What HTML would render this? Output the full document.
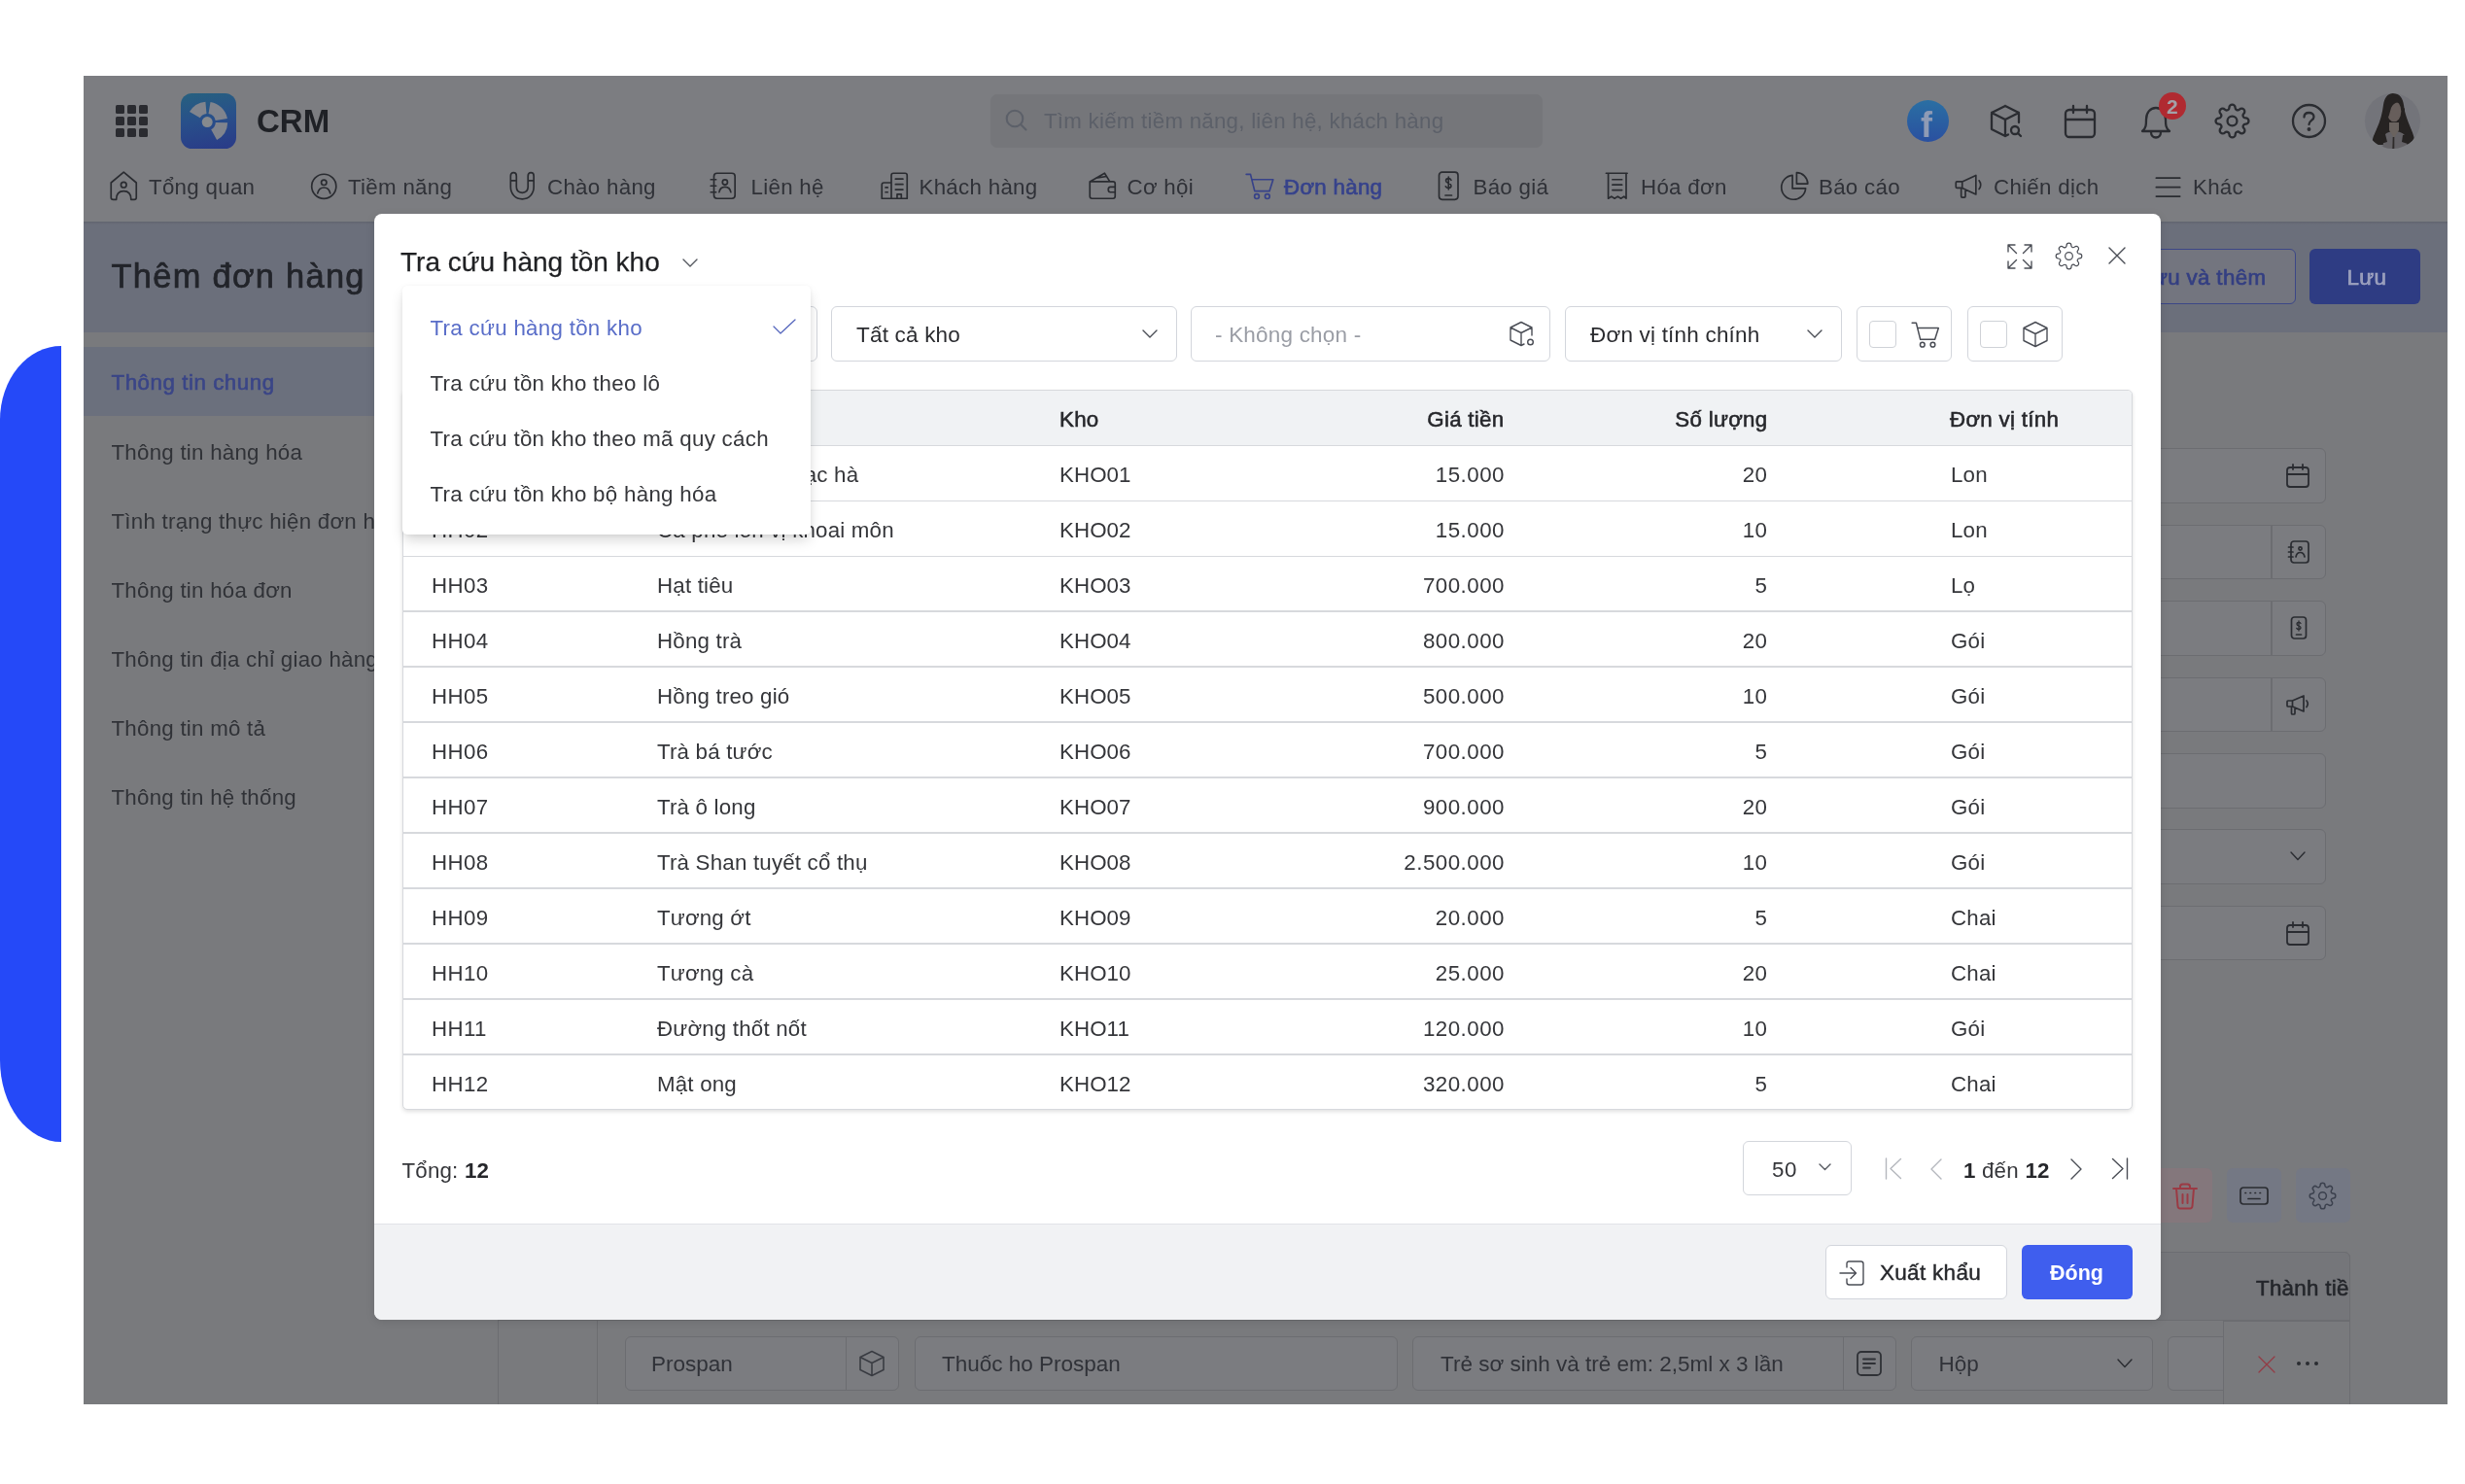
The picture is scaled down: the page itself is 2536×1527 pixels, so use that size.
<!DOCTYPE html>
<html lang="vi">
<head>
<meta charset="utf-8">
<title>Tra cứu hàng tồn kho</title>
<style>
*{box-sizing:border-box;margin:0;padding:0}
html,body{width:2536px;height:1527px;overflow:hidden;background:#fff}
body{position:relative;font-family:"Liberation Sans",sans-serif;font-size:22px;color:#2b2c30}
#wrap{position:absolute;left:0;top:0;width:2536px;height:1527px;will-change:transform;transform:translateZ(0)}
.a{position:absolute}
svg{position:absolute;overflow:visible}
.t{position:absolute;white-space:nowrap;line-height:1}
.fld{border:1.5px solid #6c6d71;border-radius:6px}
.box{border:1.5px solid #d3d6dc;border-radius:6px}
</style>
</head>
<body><div id="wrap">

<div class="a " style="left:0px;top:356px;width:63.3px;height:819px;background:#2549f8;border-radius:63px 0 0 63px / 76px 0 0 84px"></div>
<div class="a " style="left:86px;top:78px;width:2432px;height:1367px;background:#797a7d;"></div>
<div class="a " style="left:86px;top:78px;width:2432px;height:150px;background:#7c7d81;"></div>
<div class="a " style="left:86px;top:228px;width:2432px;height:114px;background:#6b6f7b;"></div>
<div class="a " style="left:86px;top:228px;width:2432px;height:3px;background:linear-gradient(rgba(0,0,0,.10),rgba(0,0,0,0));"></div>
<div class="a " style="left:119.0px;top:108.0px;width:8.6px;height:8.6px;background:#2a2b30;border-radius:1.5px"></div>
<div class="a " style="left:131.2px;top:108.0px;width:8.6px;height:8.6px;background:#2a2b30;border-radius:1.5px"></div>
<div class="a " style="left:143.4px;top:108.0px;width:8.6px;height:8.6px;background:#2a2b30;border-radius:1.5px"></div>
<div class="a " style="left:119.0px;top:120.2px;width:8.6px;height:8.6px;background:#2a2b30;border-radius:1.5px"></div>
<div class="a " style="left:131.2px;top:120.2px;width:8.6px;height:8.6px;background:#2a2b30;border-radius:1.5px"></div>
<div class="a " style="left:143.4px;top:120.2px;width:8.6px;height:8.6px;background:#2a2b30;border-radius:1.5px"></div>
<div class="a " style="left:119.0px;top:132.4px;width:8.6px;height:8.6px;background:#2a2b30;border-radius:1.5px"></div>
<div class="a " style="left:131.2px;top:132.4px;width:8.6px;height:8.6px;background:#2a2b30;border-radius:1.5px"></div>
<div class="a " style="left:143.4px;top:132.4px;width:8.6px;height:8.6px;background:#2a2b30;border-radius:1.5px"></div>
<div class="a " style="left:186px;top:96px;width:57px;height:57px;background:linear-gradient(170deg,#27617f 0%,#28508a 45%,#2a3a88 100%);border-radius:11.5px"></div>
<svg style="left:186px;top:96px;color:#2b2c30;" width="57" height="57" viewBox="0 0 57 57" fill="none" stroke="currentColor" stroke-width="2" stroke-linecap="round" stroke-linejoin="round"><g fill="#80848d" stroke="none">
<path d="M9.0 19.1 A21 21 0 0 1 25.4 8.7 L26.5 21.0 A8.6 8.6 0 0 0 19.8 25.3 Z M30.5 8.9 A21 21 0 0 1 47.9 26.0 L35.7 28.1 A8.6 8.6 0 0 0 28.5 21.1 Z M48.2 30.3 A21 21 0 0 1 37.1 48.1 L31.2 37.2 A8.6 8.6 0 0 0 35.8 29.9 Z"/>
<circle cx="27.2" cy="29.6" r="5.5" fill="#868a8e"/></g></svg>
<div class="t" style="left:264px;top:108.1px;font-size:33px;color:#1f2126;font-weight:700;">CRM</div>
<div class="a " style="left:1019px;top:97px;width:568px;height:54.5px;background:#75767a;border-radius:7px"></div>
<svg style="left:1031px;top:109px;color:#5c6069;" width="28" height="28" viewBox="0 0 28 28" fill="none" stroke="currentColor" stroke-width="2.1" stroke-linecap="round" stroke-linejoin="round"><circle cx="13" cy="13" r="8.3"/><path d="M19.3 19.3 L24.5 24.5"/></svg>
<div class="t" style="left:1074px;top:113.8px;font-size:22.3px;color:#5c6069;letter-spacing:0.25px;">Tìm kiếm tiềm năng, liên hệ, khách hàng</div>
<div class="a " style="left:1962px;top:103px;width:43px;height:43px;background:linear-gradient(180deg,#2a6fa3,#2a50a0);border-radius:50%"></div>
<div class="t" style="left:1976px;top:110.5px;font-size:36px;color:#8f9bb5;font-weight:700;">f</div>
<svg style="left:2044px;top:106px;color:#2a2c31;" width="38" height="38" viewBox="0 0 38 38" fill="none" stroke="currentColor" stroke-width="2.3" stroke-linecap="round" stroke-linejoin="round"><path d="M19 3 L33 10 L33 20 M19 3 L5 10 L5 27 L19 34 L19 17 L5 10 M19 17 L33 10 M19 34 L22 32.5"/><circle cx="29" cy="28" r="4"/><path d="M32 31 L35 34"/></svg>
<svg style="left:2123px;top:107px;color:#2a2c31;" width="34" height="36" viewBox="0 0 34 36" fill="none" stroke="currentColor" stroke-width="2.3" stroke-linecap="round" stroke-linejoin="round"><rect x="2" y="6" width="30" height="28" rx="4"/><path d="M2 16 H32 M10 2 V9 M24 2 V9"/></svg>
<svg style="left:2200px;top:106px;color:#2a2c31;" width="36" height="38" viewBox="0 0 36 38" fill="none" stroke="currentColor" stroke-width="2.3" stroke-linecap="round" stroke-linejoin="round"><path d="M4 29 C8 26 8 22 8 17 C8 10 12 5 18 5 C24 5 28 10 28 17 C28 22 28 26 32 29 Z M13 30 C13 33 15 35.5 18 35.5 C21 35.5 23 33 23 30"/></svg>
<div class="a " style="left:2220.7px;top:94.5px;width:28.5px;height:28.5px;background:#b02a31;border-radius:50%"></div>
<div class="t" style="left:2229px;top:99.0px;font-size:21px;color:#a3a1a8;font-weight:700;">2</div>
<svg style="left:2278px;top:106px;color:#2a2c31;" width="37" height="37" viewBox="0 0 24 24" fill="none" stroke="currentColor" stroke-width="1.5" stroke-linecap="round" stroke-linejoin="round"><path d="M19.4 15a1.65 1.65 0 0 0 .33 1.82l.06.06a2 2 0 1 1-2.83 2.83l-.06-.06a1.65 1.65 0 0 0-1.82-.33 1.65 1.65 0 0 0-1 1.51V21a2 2 0 0 1-4 0v-.09A1.65 1.65 0 0 0 9 19.4a1.65 1.65 0 0 0-1.82.33l-.06.06a2 2 0 1 1-2.83-2.83l.06-.06a1.65 1.65 0 0 0 .33-1.82 1.65 1.65 0 0 0-1.51-1H3a2 2 0 0 1 0-4h.09A1.65 1.65 0 0 0 4.6 9a1.65 1.65 0 0 0-.33-1.82l-.06-.06a2 2 0 1 1 2.83-2.83l.06.06a1.65 1.65 0 0 0 1.82.33H9a1.65 1.65 0 0 0 1-1.51V3a2 2 0 0 1 4 0v.09a1.65 1.65 0 0 0 1 1.51 1.65 1.65 0 0 0 1.82-.33l.06-.06a2 2 0 1 1 2.83 2.83l-.06.06a1.65 1.65 0 0 0-.33 1.82V9a1.65 1.65 0 0 0 1.51 1H21a2 2 0 0 1 0 4h-.09a1.65 1.65 0 0 0-1.51 1z"/><circle cx="12" cy="12" r="3.2"/></svg>
<svg style="left:2357px;top:106px;color:#2a2c31;" width="37" height="37" viewBox="0 0 37 37" fill="none" stroke="currentColor" stroke-width="2.3" stroke-linecap="round" stroke-linejoin="round"><circle cx="18.5" cy="18.5" r="16.5"/><path d="M13.5 14.5 C13.5 11.5 15.5 10 18.5 10 C21.5 10 23.5 11.8 23.5 14.3 C23.5 18 18.5 17.8 18.5 22"/><circle cx="18.5" cy="27" r="0.8" fill="currentColor"/></svg>
<div class="a " style="left:2433px;top:96px;width:57px;height:57px;background:#73747a;border-radius:50%"></div>
<svg style="left:2433px;top:96px;color:#2b2c30;" width="57" height="57" viewBox="0 0 57 57" fill="none" stroke="currentColor" stroke-width="2" stroke-linecap="round" stroke-linejoin="round"><defs><clipPath id="av"><circle cx="28.5" cy="28.5" r="28.5"/></clipPath></defs>
<g clip-path="url(#av)" stroke="none">
<path d="M29 0 C36 0 39 5 40 12 C41 22 45 30 48 38 C51 45 52 50 49 53 L9 53 C6 49 9 44 12 37 C16 28 18 20 19 12 C20 5 23 0 29 0 Z" fill="#262322"/>
<path d="M20 43 C23 40 26 39 30 39 C35 39 40 41 43 45 L44 58 L18 58 Z" fill="#646266"/>
<path d="M25 30 L35 30 L35 38 L30 46 L25 38 Z" fill="#6a635f"/>
<ellipse cx="30" cy="18.5" rx="7.3" ry="10.8" fill="#675e5b"/>
<path d="M21 22 C20 10 25 4 31 4 C35 4 38 7 39 11 C34 8 29 10 27 15 C25.5 20 24.5 25 22 29 Z" fill="#262322"/>
<path d="M37.5 12 C39.5 18 38.5 26 36.5 31 L40 33 L41 16 Z" fill="#262322"/>
<path d="M28.7 45 L30.3 45 L30.3 58 L28.3 58 Z" fill="#2e2b2a"/>
<path d="M13 36 C15 40 18 42 21 42 L23 50 L13 53 L9 50 Z" fill="#262322"/>
<path d="M47 37 C45 41 42 43 39 43 L38 50 L47 53 L50 50 Z" fill="#262322"/>
</g></svg>
<div class="t" style="left:153px;top:181.6px;font-size:22.3px;color:#2f3137;letter-spacing:0.3px;">Tổng quan</div>
<div class="t" style="left:358px;top:181.6px;font-size:22.3px;color:#2f3137;letter-spacing:0.3px;">Tiềm năng</div>
<div class="t" style="left:563px;top:181.6px;font-size:22.3px;color:#2f3137;letter-spacing:0.3px;">Chào hàng</div>
<div class="t" style="left:772.5px;top:181.6px;font-size:22.3px;color:#2f3137;letter-spacing:0.3px;">Liên hệ</div>
<div class="t" style="left:945.5px;top:181.6px;font-size:22.3px;color:#2f3137;letter-spacing:0.3px;">Khách hàng</div>
<div class="t" style="left:1159.5px;top:181.6px;font-size:22.3px;color:#2f3137;letter-spacing:0.3px;">Cơ hội</div>
<div class="t" style="left:1321px;top:181.6px;font-size:22.3px;color:#374289;letter-spacing:0.3px;-webkit-text-stroke:.7px #36438e;">Đơn hàng</div>
<div class="t" style="left:1515.5px;top:181.6px;font-size:22.3px;color:#2f3137;letter-spacing:0.3px;">Báo giá</div>
<div class="t" style="left:1688px;top:181.6px;font-size:22.3px;color:#2f3137;letter-spacing:0.3px;">Hóa đơn</div>
<div class="t" style="left:1871px;top:181.6px;font-size:22.3px;color:#2f3137;letter-spacing:0.3px;">Báo cáo</div>
<div class="t" style="left:2051px;top:181.6px;font-size:22.3px;color:#2f3137;letter-spacing:0.3px;">Chiến dịch</div>
<div class="t" style="left:2256px;top:181.6px;font-size:22.3px;color:#2f3137;letter-spacing:0.3px;">Khác</div>
<svg style="left:111.25px;top:175.45px;color:#2a2c31;" width="32.5" height="32.5" viewBox="0 0 30 30" fill="none" stroke="currentColor" stroke-width="1.55" stroke-linecap="round" stroke-linejoin="round"><path d="M15 2 L27 12 V26 Q27 28 25 28 H22 C22 22 19.5 20 15 20 C10.5 20 8 22 8 28 H5 Q3 28 3 26 V12 Z"/><circle cx="15" cy="14" r="2.6"/></svg>
<svg style="left:317.25px;top:175.45px;color:#2a2c31;" width="32.5" height="32.5" viewBox="0 0 30 30" fill="none" stroke="currentColor" stroke-width="1.55" stroke-linecap="round" stroke-linejoin="round"><circle cx="15" cy="15.5" r="11.6"/><circle cx="15" cy="11.8" r="2.5"/><path d="M9 22 C10 18 12.2 16.6 15 16.6 C17.8 16.6 20 18 21 22"/></svg>
<svg style="left:521.25px;top:175.45px;color:#2a2c31;" width="32.5" height="32.5" viewBox="0 0 30 30" fill="none" stroke="currentColor" stroke-width="1.55" stroke-linecap="round" stroke-linejoin="round"><path d="M4 5.5 Q4 2.5 6.75 2.5 Q9.5 2.5 9.5 5.5 V16 C9.5 19.5 11.5 21.5 15 21.5 C18.5 21.5 20.5 19.5 20.5 16 V5.5 Q20.5 2.5 23.25 2.5 Q26 2.5 26 5.5 V16 C26 22.5 21.5 27.5 15 27.5 C8.5 27.5 4 22.5 4 16 Z M4 10 H9.5 M20.5 10 H26"/></svg>
<svg style="left:727.75px;top:175.45px;color:#2a2c31;" width="32.5" height="32.5" viewBox="0 0 30 30" fill="none" stroke="currentColor" stroke-width="1.55" stroke-linecap="round" stroke-linejoin="round"><rect x="6" y="3" width="20" height="24" rx="3"/><path d="M3 9 H8 M3 15 H8 M3 21 H8"/><circle cx="16.5" cy="11.5" r="2.4"/><path d="M11 21 C11.5 17.5 13.5 16 16.5 16 C19.5 16 21.5 17.5 22 21"/></svg>
<svg style="left:903.75px;top:175.45px;color:#2a2c31;" width="32.5" height="32.5" viewBox="0 0 30 30" fill="none" stroke="currentColor" stroke-width="1.55" stroke-linecap="round" stroke-linejoin="round"><path d="M12 27 V5 Q12 3 14 3 H25 Q27 3 27 5 V27 Z M12 12 H5 Q3 12 3 14 V27 H12"/><path d="M16 8.5 H23 M16 13.5 H23 M16 18.5 H23 M6.5 16.5 H8.5 M6.5 21 H8.5 M17.5 27 V23 H21.5 V27"/></svg>
<svg style="left:1117.75px;top:175.45px;color:#2a2c31;" width="32.5" height="32.5" viewBox="0 0 30 30" fill="none" stroke="currentColor" stroke-width="1.55" stroke-linecap="round" stroke-linejoin="round"><path d="M3 11 H25 Q27 11 27 13 V25 Q27 27 25 27 H5 Q3 27 3 25 Z M3 11 L17 3 L22 11 M9 7.5 L19 6"/><path d="M27 16 H22.5 Q20.5 16 20.5 18.5 Q20.5 21 22.5 21 H27"/></svg>
<svg style="left:1279.75px;top:175.45px;color:#374289;" width="32.5" height="32.5" viewBox="0 0 30 30" fill="none" stroke="currentColor" stroke-width="1.55" stroke-linecap="round" stroke-linejoin="round"><path d="M2 4 H6 L10 20 H24 L27.5 9 H7.3"/><circle cx="12" cy="25" r="2.2"/><circle cx="22" cy="25" r="2.2"/></svg>
<svg style="left:1473.75px;top:175.45px;color:#2a2c31;" width="32.5" height="32.5" viewBox="0 0 30 30" fill="none" stroke="currentColor" stroke-width="1.55" stroke-linecap="round" stroke-linejoin="round"><rect x="6" y="2" width="18" height="26" rx="3"/><path d="M12 24 H18"/><path d="M17.5 9.5 C17 8.5 16 8 15 8 C13.5 8 12.5 9 12.5 10.2 C12.5 13 17.5 12 17.5 14.8 C17.5 16 16.5 17 15 17 C13.8 17 12.8 16.5 12.3 15.5 M15 6.5 V18.5" stroke-width="1.5"/></svg>
<svg style="left:1647.25px;top:175.45px;color:#2a2c31;" width="32.5" height="32.5" viewBox="0 0 30 30" fill="none" stroke="currentColor" stroke-width="1.55" stroke-linecap="round" stroke-linejoin="round"><path d="M5 3 H25 M7 3 V27 L10 25 L13 27 L16 25 L19 27 L22 25 L24 27 V3"/><path d="M11 9 H20 M11 14 H20 M11 19 H20"/></svg>
<svg style="left:1830.25px;top:175.45px;color:#2a2c31;" width="32.5" height="32.5" viewBox="0 0 30 30" fill="none" stroke="currentColor" stroke-width="1.55" stroke-linecap="round" stroke-linejoin="round"><path d="M13 5 A11.5 11.5 0 1 0 25.5 17.5 H13 Z"/><path d="M17 2.5 A10.5 10.5 0 0 1 27.5 13 H17 Z"/></svg>
<svg style="left:2009.25px;top:175.45px;color:#2a2c31;" width="32.5" height="32.5" viewBox="0 0 30 30" fill="none" stroke="currentColor" stroke-width="1.55" stroke-linecap="round" stroke-linejoin="round"><path d="M4 11 H9 L22 5 V23 L9 17 H4 Q3 17 3 16 V12 Q3 11 4 11 Z M9 11 V17 M8 17 V25 Q8 26 9 26 H11 Q12 26 12 25 V18.5 M25 10 Q28 14 25 18"/></svg>
<svg style="left:2214.25px;top:175.45px;color:#2a2c31;" width="32.5" height="32.5" viewBox="0 0 30 30" fill="none" stroke="currentColor" stroke-width="1.55" stroke-linecap="round" stroke-linejoin="round"><path d="M4 7.5 H26.5 M4 16.3 H26.5 M4 25 H26.5"/></svg>
<div class="t" style="left:114.5px;top:267.4px;font-size:34.4px;color:#22242a;letter-spacing:1.3px;-webkit-text-stroke:.7px #22242a;">Thêm đơn hàng</div>
<div class="a " style="left:2150px;top:256px;width:211.5px;height:56.5px;background:#73757f;border:1.8px solid #3c4787;border-radius:6px"></div>
<div class="t" style="left:2215px;top:275.1px;font-size:22.3px;color:#343f82;letter-spacing:0.35px;-webkit-text-stroke:.7px #343f82;">ưu và thêm</div>
<div class="a " style="left:2376px;top:256px;width:114px;height:56.5px;background:#2e3c83;border-radius:6px"></div>
<div class="t" style="left:2414.5px;top:275.1px;font-size:22.3px;color:#979cb8;letter-spacing:0.3px;-webkit-text-stroke:.6px #a7abc8;">Lưu</div>
<div class="a " style="left:86px;top:357px;width:426px;height:71px;background:#6b707d;"></div>
<div class="t" style="left:114.5px;top:383.4px;font-size:22.3px;color:#3a4587;letter-spacing:0.55px;-webkit-text-stroke:.6px #3a4587;">Thông tin chung</div>
<div class="t" style="left:114.5px;top:455.0px;font-size:22.3px;color:#303237;letter-spacing:0.25px;">Thông tin hàng hóa</div>
<div class="t" style="left:114.5px;top:526.0px;font-size:22.3px;color:#303237;letter-spacing:0.25px;">Tình trạng thực hiện đơn hàng</div>
<div class="t" style="left:114.5px;top:597.1px;font-size:22.3px;color:#303237;letter-spacing:0.25px;">Thông tin hóa đơn</div>
<div class="t" style="left:114.5px;top:668.1px;font-size:22.3px;color:#303237;letter-spacing:0.25px;">Thông tin địa chỉ giao hàng</div>
<div class="t" style="left:114.5px;top:739.2px;font-size:22.3px;color:#303237;letter-spacing:0.25px;">Thông tin mô tả</div>
<div class="t" style="left:114.5px;top:810.2px;font-size:22.3px;color:#303237;letter-spacing:0.25px;">Thông tin hệ thống</div>
<div class="a fld" style="left:1900px;top:461px;width:493px;height:56.5px;background:#7b7c80;"></div>
<div class="a fld" style="left:1900px;top:539.5px;width:493px;height:56.5px;background:#7b7c80;"></div>
<div class="a " style="left:2336px;top:539.5px;width:1.5px;height:56.5px;background:#6c6d71;"></div>
<div class="a fld" style="left:1900px;top:618px;width:493px;height:56.5px;background:#7b7c80;"></div>
<div class="a " style="left:2336px;top:618px;width:1.5px;height:56.5px;background:#6c6d71;"></div>
<div class="a fld" style="left:1900px;top:696.5px;width:493px;height:56.5px;background:#7b7c80;"></div>
<div class="a " style="left:2336px;top:696.5px;width:1.5px;height:56.5px;background:#6c6d71;"></div>
<div class="a fld" style="left:1900px;top:775px;width:493px;height:56.5px;background:#7b7c80;"></div>
<div class="a fld" style="left:1900px;top:853px;width:493px;height:56.5px;background:#7b7c80;"></div>
<div class="a fld" style="left:1900px;top:931.5px;width:493px;height:56.5px;background:#7b7c80;"></div>
<svg style="left:2350px;top:475px;color:#2a2c31;" width="28" height="28" viewBox="0 0 28 28" fill="none" stroke="currentColor" stroke-width="1.8" stroke-linecap="round" stroke-linejoin="round"><rect x="3" y="6" width="22" height="20" rx="3"/><path d="M3 13 H25 M9 3 V8 M19 3 V8"/></svg>
<svg style="left:2350px;top:945.5px;color:#2a2c31;" width="28" height="28" viewBox="0 0 28 28" fill="none" stroke="currentColor" stroke-width="1.8" stroke-linecap="round" stroke-linejoin="round"><rect x="3" y="6" width="22" height="20" rx="3"/><path d="M3 13 H25 M9 3 V8 M19 3 V8"/></svg>
<svg style="left:2351px;top:553.5px;color:#2a2c31;" width="28" height="28" viewBox="0 0 28 28" fill="none" stroke="currentColor" stroke-width="1.7" stroke-linecap="round" stroke-linejoin="round"><rect x="6" y="3" width="18" height="22" rx="3"/><path d="M3.5 9 H8 M3.5 14 H8 M3.5 19 H8"/><circle cx="15.5" cy="10.5" r="1.6"/><path d="M11 19 C11.5 16 13 14.5 15.5 14.5 C18 14.5 19.5 16 20 19"/></svg>
<svg style="left:2351px;top:632px;color:#2a2c31;" width="28" height="28" viewBox="0 0 28 28" fill="none" stroke="currentColor" stroke-width="1.7" stroke-linecap="round" stroke-linejoin="round"><rect x="6.5" y="3" width="15" height="22" rx="3"/><path d="M11.5 21 H16.5"/><path d="M16 9.5 C15.5 8.7 14.8 8.4 14 8.4 C12.8 8.4 12 9.2 12 10.2 C12 12.4 16 11.6 16 13.8 C16 14.8 15.2 15.6 14 15.6 C13 15.6 12.2 15.2 11.8 14.4 M14 7 V17" stroke-width="1.3"/></svg>
<svg style="left:2350px;top:710.5px;color:#2a2c31;" width="28" height="28" viewBox="0 0 28 28" fill="none" stroke="currentColor" stroke-width="1.7" stroke-linecap="round" stroke-linejoin="round"><path d="M4 10 H8.5 L20 5 V21 L8.5 16 H4 Q3 16 3 15 V11 Q3 10 4 10 Z M8.5 10 V16 M7.5 16 V23 Q7.5 24 8.5 24 H10 Q11 24 11 23 V17.3 M23 10 Q25.5 13 23 16.5"/></svg>
<svg style="left:2356px;top:876px;color:#2a2c31;" width="16" height="10" viewBox="0 0 16 10" fill="none" stroke="currentColor" stroke-width="1.4" stroke-linecap="round" stroke-linejoin="round"><path d="M1 1 L8 8.5 L15 1"/></svg>
<div class="a " style="left:2206px;top:1202px;width:70px;height:56px;background:#84777c;border-radius:6px"></div>
<div class="a " style="left:2291px;top:1202px;width:56px;height:56px;background:#747884;border-radius:6px"></div>
<div class="a " style="left:2361.5px;top:1202px;width:56px;height:56px;background:#747884;border-radius:6px"></div>
<svg style="left:2234px;top:1216px;color:#9b3a44;" width="28" height="30" viewBox="0 0 28 30" fill="none" stroke="currentColor" stroke-width="2.0" stroke-linecap="round" stroke-linejoin="round"><path d="M2 7 H26 M9 7 V5 Q9 2.5 11.5 2.5 H16.5 Q19 2.5 19 5 V7 M5 7 L6.5 25 Q6.7 27.5 9 27.5 H19 Q21.3 27.5 21.5 25 L23 7 M11.5 13 V22 M16.5 13 V22"/></svg>
<svg style="left:2304px;top:1221px;color:#2a2c31;" width="30" height="19" viewBox="0 0 30 19" fill="none" stroke="currentColor" stroke-width="1.7" stroke-linecap="round" stroke-linejoin="round"><rect x="1" y="1" width="28" height="17" rx="3"/><path d="M6 6.5 H6.5 M11 6.5 H11.5 M16 6.5 H16.5 M21 6.5 H21.5 M9 12.5 H21" /></svg>
<svg style="left:2375px;top:1215.5px;color:#3c414e;" width="29" height="29" viewBox="0 0 24 24" fill="none" stroke="currentColor" stroke-width="1.25" stroke-linecap="round" stroke-linejoin="round"><path d="M19.4 15a1.65 1.65 0 0 0 .33 1.82l.06.06a2 2 0 1 1-2.83 2.83l-.06-.06a1.65 1.65 0 0 0-1.82-.33 1.65 1.65 0 0 0-1 1.51V21a2 2 0 0 1-4 0v-.09A1.65 1.65 0 0 0 9 19.4a1.65 1.65 0 0 0-1.82.33l-.06.06a2 2 0 1 1-2.83-2.83l.06-.06a1.65 1.65 0 0 0 .33-1.82 1.65 1.65 0 0 0-1.51-1H3a2 2 0 0 1 0-4h.09A1.65 1.65 0 0 0 4.6 9a1.65 1.65 0 0 0-.33-1.82l-.06-.06a2 2 0 1 1 2.83-2.83l.06.06a1.65 1.65 0 0 0 1.82.33H9a1.65 1.65 0 0 0 1-1.51V3a2 2 0 0 1 4 0v.09a1.65 1.65 0 0 0 1 1.51 1.65 1.65 0 0 0 1.82-.33l.06-.06a2 2 0 1 1 2.83 2.83l-.06.06a1.65 1.65 0 0 0-.33 1.82V9a1.65 1.65 0 0 0 1.51 1H21a2 2 0 0 1 0 4h-.09a1.65 1.65 0 0 0-1.51 1z"/><circle cx="12" cy="12" r="3.2"/></svg>
<div class="a " style="left:512px;top:1288px;width:1905.5px;height:160px;background:transparent;border:1.5px solid #6c6d71;border-radius:6px 6px 0 0"></div>
<div class="a " style="left:512px;top:1288px;width:1905.5px;height:71px;background:#75767a;border:1.5px solid #6c6d71;border-radius:6px 6px 0 0"></div>
<div class="a " style="left:613.5px;top:1288px;width:1.5px;height:160px;background:#6c6d71;"></div>
<div class="a" style="left:2200px;top:1288px;width:216.5px;height:71px;overflow:hidden">
<div class="t" style="left:121px;top:26.6px;font-size:22.3px;color:#24262b;letter-spacing:0.3px;-webkit-text-stroke:.6px #24262b;">Thành tiền</div>
</div>
<div class="a fld" style="left:642.5px;top:1375px;width:282.5px;height:56px;background:#7b7c80;"></div>
<div class="a " style="left:869.5px;top:1375px;width:1.5px;height:56px;background:#6c6d71;"></div>
<div class="a fld" style="left:941px;top:1375px;width:497px;height:56px;background:#7b7c80;"></div>
<div class="a fld" style="left:1453px;top:1375px;width:498px;height:56px;background:#7b7c80;"></div>
<div class="a " style="left:1895.5px;top:1375px;width:1.5px;height:56px;background:#6c6d71;"></div>
<div class="a fld" style="left:1966px;top:1375px;width:248.5px;height:56px;background:#7b7c80;"></div>
<div class="a fld" style="left:2230px;top:1375px;width:120px;height:56px;background:#7b7c80;"></div>
<div class="t" style="left:670px;top:1392.5px;font-size:22.5px;color:#303238;">Prospan</div>
<div class="t" style="left:969px;top:1392.5px;font-size:22.5px;color:#303238;">Thuốc ho Prospan</div>
<div class="t" style="left:1482px;top:1392.5px;font-size:22.5px;color:#303238;">Trẻ sơ sinh và trẻ em: 2,5ml x 3 lần</div>
<div class="t" style="left:1994.5px;top:1392.5px;font-size:22.5px;color:#303238;">Hộp</div>
<svg style="left:882px;top:1388px;color:#3a3c42;" width="30" height="30" viewBox="0 0 30 30" fill="none" stroke="currentColor" stroke-width="1.6" stroke-linecap="round" stroke-linejoin="round"><path d="M15 2.5 L27 8.5 V21.5 L15 27.5 L3 21.5 V8.5 Z M3 8.5 L15 14.5 L27 8.5 M15 14.5 V27.5"/></svg>
<svg style="left:1909px;top:1389px;color:#2f3136;" width="28" height="28" viewBox="0 0 28 28" fill="none" stroke="currentColor" stroke-width="1.8" stroke-linecap="round" stroke-linejoin="round"><rect x="2" y="2" width="24" height="24" rx="4"/><path d="M8 9.5 H20 M8 14 H20 M8 18.5 H15"/></svg>
<svg style="left:2177.5px;top:1398px;color:#2a2c31;" width="16" height="10" viewBox="0 0 16 10" fill="none" stroke="currentColor" stroke-width="1.4" stroke-linecap="round" stroke-linejoin="round"><path d="M1 1 L8 8.5 L15 1"/></svg>
<div class="a " style="left:2287px;top:1359px;width:130.5px;height:90px;background:#797a7d;border-left:1.5px solid #6c6d71;border-right:1.5px solid #6c6d71;border-top:1.5px solid #6c6d71"></div>
<svg style="left:2322px;top:1393.5px;color:#933c45;" width="20" height="20" viewBox="0 0 20 20" fill="none" stroke="currentColor" stroke-width="1.3" stroke-linecap="round" stroke-linejoin="round"><path d="M2 2 L18 18 M18 2 L2 18"/></svg>
<div class="a " style="left:2362.5px;top:1401px;width:4px;height:4px;background:#2a2c31;border-radius:50%"></div>
<div class="a " style="left:2371.8px;top:1401px;width:4px;height:4px;background:#2a2c31;border-radius:50%"></div>
<div class="a " style="left:2381.1px;top:1401px;width:4px;height:4px;background:#2a2c31;border-radius:50%"></div>
<div class="a " style="left:0px;top:1445px;width:2536px;height:82px;background:#fff;"></div>
<div class="a " style="left:2518px;top:0px;width:18px;height:1527px;background:#fff;"></div>
<div class="a " style="left:385px;top:220px;width:1838px;height:1138px;background:#fff;border-radius:8px;box-shadow:0 2px 10px rgba(0,0,0,.10)"></div>
<div class="a " style="left:385px;top:1259px;width:1838px;height:99px;background:#f1f2f4;border-radius:0 0 8px 8px;border-top:1.5px solid #e1e3e7"></div>
<div class="t" style="left:412px;top:255.8px;font-size:28px;color:#1f2023;-webkit-text-stroke:.25px #1f2023;">Tra cứu hàng tồn kho</div>
<svg style="left:702px;top:265.5px;color:#55585f;" width="16" height="9" viewBox="0 0 16 9" fill="none" stroke="currentColor" stroke-width="1.4" stroke-linecap="round" stroke-linejoin="round"><path d="M1 1 L8 8 L15 1"/></svg>
<svg style="left:2065px;top:250.5px;color:#4a4d55;" width="26" height="26" viewBox="0 0 26 26" fill="none" stroke="currentColor" stroke-width="1.35" stroke-linecap="round" stroke-linejoin="round"><path d="M1 8 V1 H8 M1 1 L9.5 9.5 M18 1 H25 V8 M25 1 L16.5 9.5 M1 18 V25 H8 M1 25 L9.5 16.5 M25 18 V25 H18 M25 25 L16.5 16.5"/></svg>
<svg style="left:2113.5px;top:248.5px;color:#4a4d55;" width="29" height="29" viewBox="0 0 24 24" fill="none" stroke="currentColor" stroke-width="1.0" stroke-linecap="round" stroke-linejoin="round"><path d="M19.4 15a1.65 1.65 0 0 0 .33 1.82l.06.06a2 2 0 1 1-2.83 2.83l-.06-.06a1.65 1.65 0 0 0-1.82-.33 1.65 1.65 0 0 0-1 1.51V21a2 2 0 0 1-4 0v-.09A1.65 1.65 0 0 0 9 19.4a1.65 1.65 0 0 0-1.82.33l-.06.06a2 2 0 1 1-2.83-2.83l.06-.06a1.65 1.65 0 0 0 .33-1.82 1.65 1.65 0 0 0-1.51-1H3a2 2 0 0 1 0-4h.09A1.65 1.65 0 0 0 4.6 9a1.65 1.65 0 0 0-.33-1.82l-.06-.06a2 2 0 1 1 2.83-2.83l.06.06a1.65 1.65 0 0 0 1.82.33H9a1.65 1.65 0 0 0 1-1.51V3a2 2 0 0 1 4 0v.09a1.65 1.65 0 0 0 1 1.51 1.65 1.65 0 0 0 1.82-.33l.06-.06a2 2 0 1 1 2.83 2.83l-.06.06a1.65 1.65 0 0 0-.33 1.82V9a1.65 1.65 0 0 0 1.51 1H21a2 2 0 0 1 0 4h-.09a1.65 1.65 0 0 0-1.51 1z"/><circle cx="12" cy="12" r="3.2"/></svg>
<svg style="left:2169px;top:254px;color:#4a4d55;" width="18" height="18" viewBox="0 0 18 18" fill="none" stroke="currentColor" stroke-width="1.4" stroke-linecap="round" stroke-linejoin="round"><path d="M1 1 L17 17 M17 1 L1 17"/></svg>
<div class="a box" style="left:600px;top:315px;width:240.5px;height:56.5px;background:#fff;"></div>
<div class="a box" style="left:855px;top:315px;width:355.5px;height:56.5px;background:#fff;"></div>
<div class="a box" style="left:1225px;top:315px;width:370px;height:56.5px;background:#fff;"></div>
<div class="a box" style="left:1610px;top:315px;width:284.5px;height:56.5px;background:#fff;"></div>
<div class="a box" style="left:1909.5px;top:315px;width:98px;height:56.5px;background:#fff;"></div>
<div class="a box" style="left:2023.5px;top:315px;width:98px;height:56.5px;background:#fff;"></div>
<div class="t" style="left:881px;top:333.5px;font-size:22.5px;color:#2a2b2f;letter-spacing:0.2px;">Tất cả kho</div>
<svg style="left:1175px;top:339px;color:#4a4d55;" width="16" height="9" viewBox="0 0 16 9" fill="none" stroke="currentColor" stroke-width="1.4" stroke-linecap="round" stroke-linejoin="round"><path d="M1 1 L8 8 L15 1"/></svg>
<div class="t" style="left:1250px;top:333.5px;font-size:22.5px;color:#9a9da5;letter-spacing:0.2px;">- Không chọn -</div>
<svg style="left:1551px;top:328.5px;color:#4a4d55;" width="30" height="30" viewBox="0 0 30 30" fill="none" stroke="currentColor" stroke-width="1.4" stroke-linecap="round" stroke-linejoin="round"><path d="M14 2.5 L25 8 V16 M14 2.5 L3 8 V21 L14 26.5 V13.5 L3 8 M14 13.5 L25 8 M14 26.5 L17 25"/><circle cx="23.5" cy="23" r="2.8"/></svg>
<div class="t" style="left:1636px;top:333.5px;font-size:22.5px;color:#2a2b2f;letter-spacing:0.2px;">Đơn vị tính chính</div>
<svg style="left:1859px;top:339px;color:#4a4d55;" width="16" height="9" viewBox="0 0 16 9" fill="none" stroke="currentColor" stroke-width="1.4" stroke-linecap="round" stroke-linejoin="round"><path d="M1 1 L8 8 L15 1"/></svg>
<div class="a " style="left:1923px;top:329.5px;width:28px;height:28px;background:#fff;border:1.5px solid #cfd2d7;border-radius:4px"></div>
<div class="a " style="left:2037px;top:329.5px;width:28px;height:28px;background:#fff;border:1.5px solid #cfd2d7;border-radius:4px"></div>
<svg style="left:1965px;top:328px;color:#4a4d55;" width="32" height="32" viewBox="0 0 30 30" fill="none" stroke="currentColor" stroke-width="1.4" stroke-linecap="round" stroke-linejoin="round"><path d="M2 4 H6 L10 20 H24 L27.5 9 H7.3"/><circle cx="12" cy="25" r="2.2"/><circle cx="22" cy="25" r="2.2"/></svg>
<svg style="left:2079px;top:328.5px;color:#4a4d55;" width="30" height="30" viewBox="0 0 30 30" fill="none" stroke="currentColor" stroke-width="1.4" stroke-linecap="round" stroke-linejoin="round"><path d="M15 2.5 L27 8.5 V21.5 L15 27.5 L3 21.5 V8.5 Z M3 8.5 L15 14.5 L27 8.5 M15 14.5 V27.5"/></svg>
<div class="a " style="left:414px;top:400.5px;width:1780px;height:741.3px;background:#fff;border:1.5px solid #d7d9dd;border-radius:5px;box-shadow:0 2px 4px rgba(0,0,0,.12)"></div>
<div class="a " style="left:415.5px;top:402px;width:1777px;height:56px;background:#f0f2f4;border-radius:4px 4px 0 0"></div>
<div class="a " style="left:414px;top:457.5px;width:1780px;height:1.5px;background:#d7d9dd;"></div>
<div class="a " style="left:414px;top:514.5px;width:1780px;height:1.5px;background:#d7d9dd;"></div>
<div class="a " style="left:414px;top:571.5px;width:1780px;height:1.5px;background:#d7d9dd;"></div>
<div class="a " style="left:414px;top:628.0px;width:1780px;height:1.5px;background:#d7d9dd;"></div>
<div class="a " style="left:414px;top:685.0px;width:1780px;height:1.5px;background:#d7d9dd;"></div>
<div class="a " style="left:414px;top:742.0px;width:1780px;height:1.5px;background:#d7d9dd;"></div>
<div class="a " style="left:414px;top:799.0px;width:1780px;height:1.5px;background:#d7d9dd;"></div>
<div class="a " style="left:414px;top:856.0px;width:1780px;height:1.5px;background:#d7d9dd;"></div>
<div class="a " style="left:414px;top:913.0px;width:1780px;height:1.5px;background:#d7d9dd;"></div>
<div class="a " style="left:414px;top:970.0px;width:1780px;height:1.5px;background:#d7d9dd;"></div>
<div class="a " style="left:414px;top:1027.0px;width:1780px;height:1.5px;background:#d7d9dd;"></div>
<div class="a " style="left:414px;top:1084.0px;width:1780px;height:1.5px;background:#d7d9dd;"></div>
<div class="t" style="left:444px;top:421.3px;font-size:22.3px;color:#26272b;letter-spacing:0.3px;-webkit-text-stroke:.55px #26272b;">Mã hàng hóa</div>
<div class="t" style="left:676px;top:421.3px;font-size:22.3px;color:#26272b;letter-spacing:0.3px;-webkit-text-stroke:.55px #26272b;">Tên hàng hóa</div>
<div class="t" style="left:1090px;top:421.3px;font-size:22.3px;color:#26272b;letter-spacing:0.3px;-webkit-text-stroke:.55px #26272b;">Kho</div>
<div class="t" style="right:988.5px;top:421.3px;font-size:22.3px;color:#26272b;letter-spacing:0.3px;-webkit-text-stroke:.55px #26272b;">Giá tiền</div>
<div class="t" style="right:717.5px;top:421.3px;font-size:22.3px;color:#26272b;letter-spacing:0.3px;-webkit-text-stroke:.55px #26272b;">Số lượng</div>
<div class="t" style="left:2006px;top:421.3px;font-size:22.3px;color:#26272b;letter-spacing:0.3px;-webkit-text-stroke:.55px #26272b;">Đơn vị tính</div>
<div class="t" style="left:444px;top:478.3px;font-size:22.3px;color:#35363a;letter-spacing:0.35px;">HH01</div>
<div class="t" style="left:676px;top:478.3px;font-size:22.3px;color:#35363a;letter-spacing:0.2px;">Cà phê lon vị bạc hà</div>
<div class="t" style="left:1090px;top:478.3px;font-size:22.3px;color:#35363a;letter-spacing:0.1px;">KHO01</div>
<div class="t" style="right:988px;top:478.3px;font-size:22.3px;color:#35363a;letter-spacing:0.5px;">15.000</div>
<div class="t" style="right:717.5px;top:478.3px;font-size:22.3px;color:#35363a;letter-spacing:0.5px;">20</div>
<div class="t" style="left:2007px;top:478.3px;font-size:22.3px;color:#35363a;letter-spacing:0.2px;">Lon</div>
<div class="t" style="left:444px;top:535.3px;font-size:22.3px;color:#35363a;letter-spacing:0.35px;">HH02</div>
<div class="t" style="left:676px;top:535.3px;font-size:22.3px;color:#35363a;letter-spacing:0.2px;">Cà phê lon vị khoai môn</div>
<div class="t" style="left:1090px;top:535.3px;font-size:22.3px;color:#35363a;letter-spacing:0.1px;">KHO02</div>
<div class="t" style="right:988px;top:535.3px;font-size:22.3px;color:#35363a;letter-spacing:0.5px;">15.000</div>
<div class="t" style="right:717.5px;top:535.3px;font-size:22.3px;color:#35363a;letter-spacing:0.5px;">10</div>
<div class="t" style="left:2007px;top:535.3px;font-size:22.3px;color:#35363a;letter-spacing:0.2px;">Lon</div>
<div class="t" style="left:444px;top:592.3px;font-size:22.3px;color:#35363a;letter-spacing:0.35px;">HH03</div>
<div class="t" style="left:676px;top:592.3px;font-size:22.3px;color:#35363a;letter-spacing:0.2px;">Hạt tiêu</div>
<div class="t" style="left:1090px;top:592.3px;font-size:22.3px;color:#35363a;letter-spacing:0.1px;">KHO03</div>
<div class="t" style="right:988px;top:592.3px;font-size:22.3px;color:#35363a;letter-spacing:0.5px;">700.000</div>
<div class="t" style="right:717.5px;top:592.3px;font-size:22.3px;color:#35363a;letter-spacing:0.5px;">5</div>
<div class="t" style="left:2007px;top:592.3px;font-size:22.3px;color:#35363a;letter-spacing:0.2px;">Lọ</div>
<div class="t" style="left:444px;top:649.3px;font-size:22.3px;color:#35363a;letter-spacing:0.35px;">HH04</div>
<div class="t" style="left:676px;top:649.3px;font-size:22.3px;color:#35363a;letter-spacing:0.2px;">Hồng trà</div>
<div class="t" style="left:1090px;top:649.3px;font-size:22.3px;color:#35363a;letter-spacing:0.1px;">KHO04</div>
<div class="t" style="right:988px;top:649.3px;font-size:22.3px;color:#35363a;letter-spacing:0.5px;">800.000</div>
<div class="t" style="right:717.5px;top:649.3px;font-size:22.3px;color:#35363a;letter-spacing:0.5px;">20</div>
<div class="t" style="left:2007px;top:649.3px;font-size:22.3px;color:#35363a;letter-spacing:0.2px;">Gói</div>
<div class="t" style="left:444px;top:706.3px;font-size:22.3px;color:#35363a;letter-spacing:0.35px;">HH05</div>
<div class="t" style="left:676px;top:706.3px;font-size:22.3px;color:#35363a;letter-spacing:0.2px;">Hồng treo gió</div>
<div class="t" style="left:1090px;top:706.3px;font-size:22.3px;color:#35363a;letter-spacing:0.1px;">KHO05</div>
<div class="t" style="right:988px;top:706.3px;font-size:22.3px;color:#35363a;letter-spacing:0.5px;">500.000</div>
<div class="t" style="right:717.5px;top:706.3px;font-size:22.3px;color:#35363a;letter-spacing:0.5px;">10</div>
<div class="t" style="left:2007px;top:706.3px;font-size:22.3px;color:#35363a;letter-spacing:0.2px;">Gói</div>
<div class="t" style="left:444px;top:763.3px;font-size:22.3px;color:#35363a;letter-spacing:0.35px;">HH06</div>
<div class="t" style="left:676px;top:763.3px;font-size:22.3px;color:#35363a;letter-spacing:0.2px;">Trà bá tước</div>
<div class="t" style="left:1090px;top:763.3px;font-size:22.3px;color:#35363a;letter-spacing:0.1px;">KHO06</div>
<div class="t" style="right:988px;top:763.3px;font-size:22.3px;color:#35363a;letter-spacing:0.5px;">700.000</div>
<div class="t" style="right:717.5px;top:763.3px;font-size:22.3px;color:#35363a;letter-spacing:0.5px;">5</div>
<div class="t" style="left:2007px;top:763.3px;font-size:22.3px;color:#35363a;letter-spacing:0.2px;">Gói</div>
<div class="t" style="left:444px;top:820.3px;font-size:22.3px;color:#35363a;letter-spacing:0.35px;">HH07</div>
<div class="t" style="left:676px;top:820.3px;font-size:22.3px;color:#35363a;letter-spacing:0.2px;">Trà ô long</div>
<div class="t" style="left:1090px;top:820.3px;font-size:22.3px;color:#35363a;letter-spacing:0.1px;">KHO07</div>
<div class="t" style="right:988px;top:820.3px;font-size:22.3px;color:#35363a;letter-spacing:0.5px;">900.000</div>
<div class="t" style="right:717.5px;top:820.3px;font-size:22.3px;color:#35363a;letter-spacing:0.5px;">20</div>
<div class="t" style="left:2007px;top:820.3px;font-size:22.3px;color:#35363a;letter-spacing:0.2px;">Gói</div>
<div class="t" style="left:444px;top:877.3px;font-size:22.3px;color:#35363a;letter-spacing:0.35px;">HH08</div>
<div class="t" style="left:676px;top:877.3px;font-size:22.3px;color:#35363a;letter-spacing:0.2px;">Trà Shan tuyết cổ thụ</div>
<div class="t" style="left:1090px;top:877.3px;font-size:22.3px;color:#35363a;letter-spacing:0.1px;">KHO08</div>
<div class="t" style="right:988px;top:877.3px;font-size:22.3px;color:#35363a;letter-spacing:0.5px;">2.500.000</div>
<div class="t" style="right:717.5px;top:877.3px;font-size:22.3px;color:#35363a;letter-spacing:0.5px;">10</div>
<div class="t" style="left:2007px;top:877.3px;font-size:22.3px;color:#35363a;letter-spacing:0.2px;">Gói</div>
<div class="t" style="left:444px;top:934.3px;font-size:22.3px;color:#35363a;letter-spacing:0.35px;">HH09</div>
<div class="t" style="left:676px;top:934.3px;font-size:22.3px;color:#35363a;letter-spacing:0.2px;">Tương ớt</div>
<div class="t" style="left:1090px;top:934.3px;font-size:22.3px;color:#35363a;letter-spacing:0.1px;">KHO09</div>
<div class="t" style="right:988px;top:934.3px;font-size:22.3px;color:#35363a;letter-spacing:0.5px;">20.000</div>
<div class="t" style="right:717.5px;top:934.3px;font-size:22.3px;color:#35363a;letter-spacing:0.5px;">5</div>
<div class="t" style="left:2007px;top:934.3px;font-size:22.3px;color:#35363a;letter-spacing:0.2px;">Chai</div>
<div class="t" style="left:444px;top:991.3px;font-size:22.3px;color:#35363a;letter-spacing:0.35px;">HH10</div>
<div class="t" style="left:676px;top:991.3px;font-size:22.3px;color:#35363a;letter-spacing:0.2px;">Tương cà</div>
<div class="t" style="left:1090px;top:991.3px;font-size:22.3px;color:#35363a;letter-spacing:0.1px;">KHO10</div>
<div class="t" style="right:988px;top:991.3px;font-size:22.3px;color:#35363a;letter-spacing:0.5px;">25.000</div>
<div class="t" style="right:717.5px;top:991.3px;font-size:22.3px;color:#35363a;letter-spacing:0.5px;">20</div>
<div class="t" style="left:2007px;top:991.3px;font-size:22.3px;color:#35363a;letter-spacing:0.2px;">Chai</div>
<div class="t" style="left:444px;top:1048.3px;font-size:22.3px;color:#35363a;letter-spacing:0.35px;">HH11</div>
<div class="t" style="left:676px;top:1048.3px;font-size:22.3px;color:#35363a;letter-spacing:0.2px;">Đường thốt nốt</div>
<div class="t" style="left:1090px;top:1048.3px;font-size:22.3px;color:#35363a;letter-spacing:0.1px;">KHO11</div>
<div class="t" style="right:988px;top:1048.3px;font-size:22.3px;color:#35363a;letter-spacing:0.5px;">120.000</div>
<div class="t" style="right:717.5px;top:1048.3px;font-size:22.3px;color:#35363a;letter-spacing:0.5px;">10</div>
<div class="t" style="left:2007px;top:1048.3px;font-size:22.3px;color:#35363a;letter-spacing:0.2px;">Gói</div>
<div class="t" style="left:444px;top:1105.3px;font-size:22.3px;color:#35363a;letter-spacing:0.35px;">HH12</div>
<div class="t" style="left:676px;top:1105.3px;font-size:22.3px;color:#35363a;letter-spacing:0.2px;">Mật ong</div>
<div class="t" style="left:1090px;top:1105.3px;font-size:22.3px;color:#35363a;letter-spacing:0.1px;">KHO12</div>
<div class="t" style="right:988px;top:1105.3px;font-size:22.3px;color:#35363a;letter-spacing:0.5px;">320.000</div>
<div class="t" style="right:717.5px;top:1105.3px;font-size:22.3px;color:#35363a;letter-spacing:0.5px;">5</div>
<div class="t" style="left:2007px;top:1105.3px;font-size:22.3px;color:#35363a;letter-spacing:0.2px;">Chai</div>
<div class="t" style="left:413.5px;top:1193.6px;font-size:22.3px;color:#35363a;letter-spacing:0.2px;">Tổng:</div>
<div class="t" style="left:478px;top:1193.6px;font-size:22.3px;color:#26272b;font-weight:700;">12</div>
<div class="a box" style="left:1793px;top:1174px;width:112px;height:55.5px;background:#fff;"></div>
<div class="t" style="left:1823px;top:1193.1px;font-size:22.3px;color:#35363a;letter-spacing:0.5px;">50</div>
<svg style="left:1870.5px;top:1197px;color:#55585f;" width="13" height="8" viewBox="0 0 13 8" fill="none" stroke="currentColor" stroke-width="1.4" stroke-linecap="round" stroke-linejoin="round"><path d="M1 1 L6.5 6.5 L12 1"/></svg>
<svg style="left:1939px;top:1191px;color:#b4b7bd;" width="18" height="23" viewBox="0 0 18 23" fill="none" stroke="currentColor" stroke-width="1.4" stroke-linecap="round" stroke-linejoin="round"><path d="M1.5 1 V22 M16.5 1.5 L6 11.5 L16.5 21.5"/></svg>
<svg style="left:1986px;top:1191.5px;color:#b4b7bd;" width="12" height="22" viewBox="0 0 12 22" fill="none" stroke="currentColor" stroke-width="1.4" stroke-linecap="round" stroke-linejoin="round"><path d="M11 1 L1 11 L11 21"/></svg>
<div class="t" style="left:2020px;top:1193.6px;font-size:22.3px;color:#26272b;font-weight:700;">1</div>
<div class="t" style="left:2039px;top:1193.6px;font-size:22.3px;color:#35363a;letter-spacing:0.2px;">đến</div>
<div class="t" style="left:2083.5px;top:1193.6px;font-size:22.3px;color:#26272b;font-weight:700;">12</div>
<svg style="left:2130px;top:1191.5px;color:#4a4d55;" width="12" height="22" viewBox="0 0 12 22" fill="none" stroke="currentColor" stroke-width="1.4" stroke-linecap="round" stroke-linejoin="round"><path d="M1 1 L11 11 L1 21"/></svg>
<svg style="left:2171.5px;top:1191px;color:#4a4d55;" width="18" height="23" viewBox="0 0 18 23" fill="none" stroke="currentColor" stroke-width="1.4" stroke-linecap="round" stroke-linejoin="round"><path d="M1.5 1.5 L12 11.5 L1.5 21.5 M16.5 1 V22"/></svg>
<div class="a box" style="left:1877.5px;top:1280.5px;width:187.5px;height:56.5px;background:#fff;"></div>
<svg style="left:1890.5px;top:1295.5px;color:#4a4d55;" width="28" height="28" viewBox="0 0 28 28" fill="none" stroke="currentColor" stroke-width="1.4" stroke-linecap="round" stroke-linejoin="round"><path d="M9 8 V4.5 Q9 2 11.5 2 H23.5 Q26 2 26 4.5 V23.5 Q26 26 23.5 26 H11.5 Q9 26 9 23.5 V20 M2 14 H18 M13 8.5 L18.5 14 L13 19.5"/></svg>
<div class="t" style="left:1934px;top:1299.0px;font-size:22.5px;color:#26272b;letter-spacing:0.3px;-webkit-text-stroke:.4px #26272b;">Xuất khẩu</div>
<div class="a " style="left:2080px;top:1280.5px;width:114px;height:56.5px;background:#3f5eee;border-radius:6px"></div>
<div class="t" style="left:2109px;top:1299.8px;font-size:21.5px;color:#fff;font-weight:700;">Đóng</div>
<div class="a " style="left:413.5px;top:294px;width:420.5px;height:255.5px;background:#fff;border-radius:5px;box-shadow:0 7px 14px -2px rgba(0,0,0,.17),0 1px 4px rgba(0,0,0,.05)"></div>
<div class="t" style="left:442.5px;top:326.6px;font-size:22.3px;color:#596dc8;letter-spacing:0.3px;">Tra cứu hàng tồn kho</div>
<div class="t" style="left:442.5px;top:383.6px;font-size:22.3px;color:#35363a;letter-spacing:0.3px;">Tra cứu tồn kho theo lô</div>
<div class="t" style="left:442.5px;top:440.6px;font-size:22.3px;color:#35363a;letter-spacing:0.3px;">Tra cứu tồn kho theo mã quy cách</div>
<div class="t" style="left:442.5px;top:497.6px;font-size:22.3px;color:#35363a;letter-spacing:0.3px;">Tra cứu tồn kho bộ hàng hóa</div>
<svg style="left:795px;top:328px;color:#5566bd;" width="24" height="16" viewBox="0 0 24 16" fill="none" stroke="currentColor" stroke-width="1.3" stroke-linecap="round" stroke-linejoin="round"><path d="M1 8 L8 15 L23 1"/></svg>
</div>
</body>
</html>
